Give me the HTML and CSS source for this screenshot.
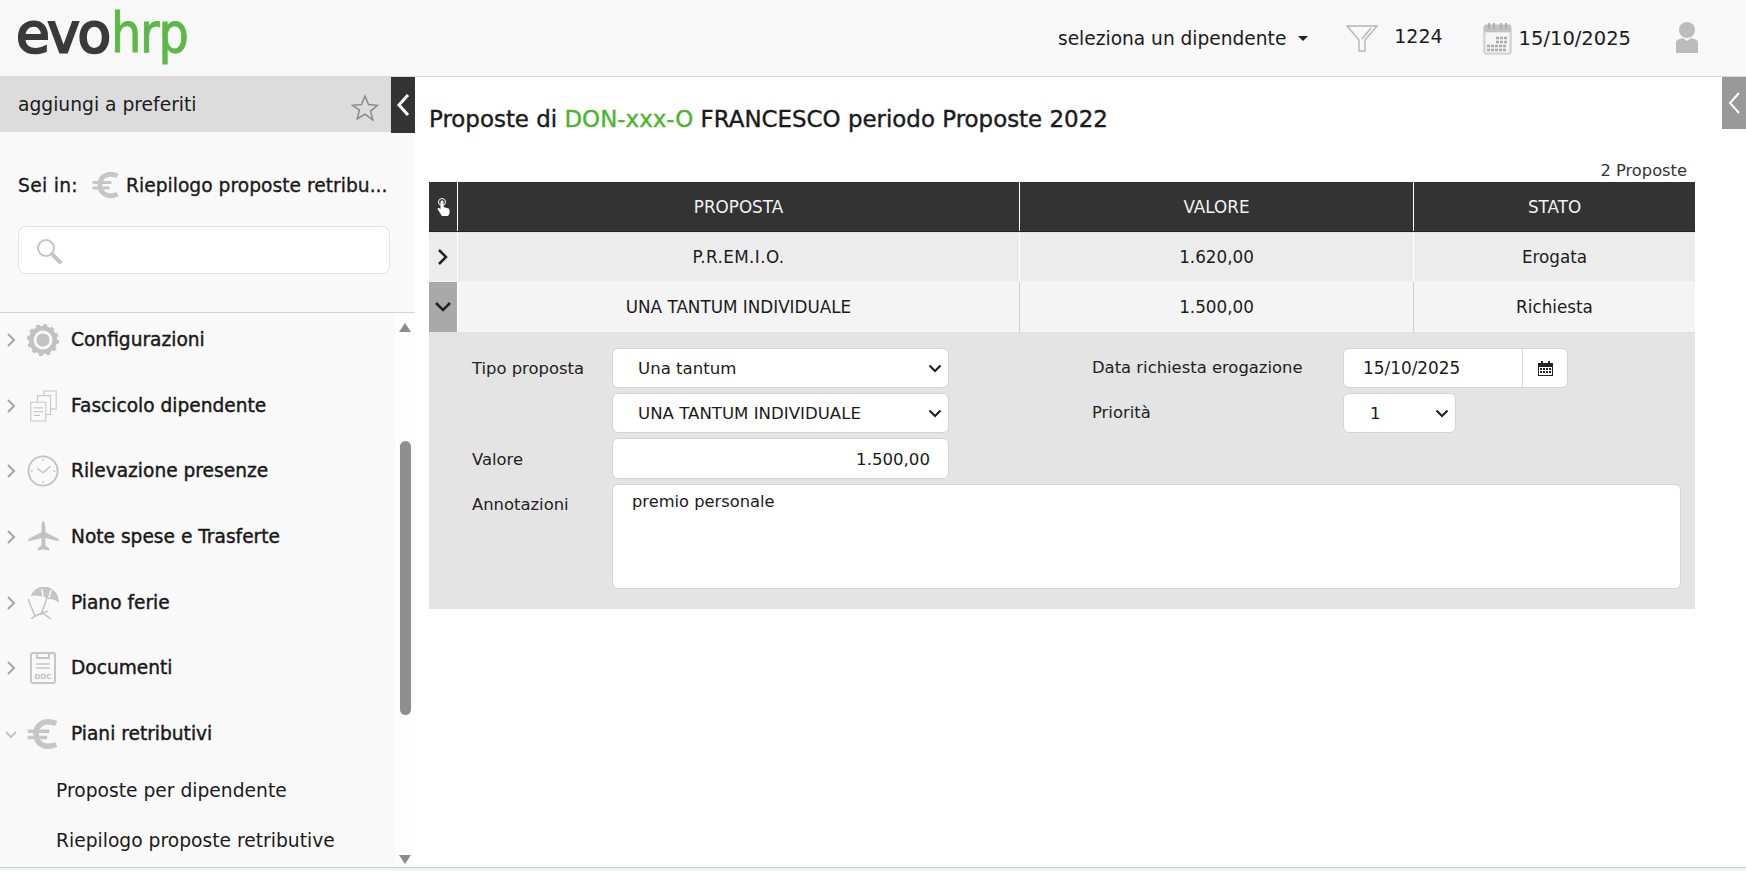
FILE: index.html
```html
<!DOCTYPE html>
<html lang="it">
<head>
<meta charset="utf-8">
<title>evohrp</title>
<link rel="stylesheet" href="styles.css">
</head>
<body>
<header class="topbar">
  <div class="logo"><span class="logo-evo">evo</span><span class="logo-hrp">hrp</span></div>
  <div class="top-actions">
    <div class="emp-select">seleziona un dipendente <span class="caret"></span></div>
    <div class="filter">
      <svg width="32" height="29" viewBox="0 0 32 29" fill="none" stroke="#b4b4b4" stroke-width="1.400"><path d="M1 2h30L19 16v11h-6V16z"/><path d="M25 4 16 15"/></svg>
      <span class="filter-n">1224</span>
    </div>
    <div class="date">
      <svg width="29" height="33" viewBox="0 0 29 33"><rect x="1" y="3" width="27" height="29" rx="2" fill="#e4e4e4" stroke="#bdbdbd"/><rect x="1" y="3" width="27" height="7" fill="#c2c2c2"/><path d="M6 1v6M11 1v6M18 1v6M23 1v6" stroke="#b0b0b0" stroke-width="2"/><rect x="3" y="11" width="23" height="19" fill="#f6f6f6"/><path d="M13 16h11M13 20h11M4 24h20M4 28h20" stroke="#aaa" stroke-width="2.600" stroke-dasharray="3 1"/></svg>
      <span>15/10/2025</span>
    </div>
    <svg class="user" width="24" height="32" viewBox="0 0 24 32" fill="#bcbcbc"><ellipse cx="12" cy="8" rx="8" ry="8"/><path d="M1 31V21c0-3 3-4 7-5l4 3 4-3c4 1 7 2 7 5v10z"/></svg>
  </div>
</header>
<div class="layout">
  <aside class="sidebar">
    <div class="fav">
      <span>aggiungi a preferiti</span>
      <svg width="28" height="27" viewBox="0 0 28 27" fill="none" stroke="#8a8a8a" stroke-width="1.500"><path d="M14 2l3.500 8.600 9 .7-6.900 5.800 2.200 8.900L14 20.200 6.200 25l2.200-8.900L1.500 11.300l9-.7z"/></svg>
    </div>
    <button class="toggle toggle-left" type="button"><svg width="14" height="24" viewBox="0 0 14 24" fill="none" stroke="#fff" stroke-width="3"><path d="M12 2 3 12l9 10"/></svg></button>
    <div class="crumb">
      <span class="crumb-label">Sei in:</span>
      <svg width="28" height="30" viewBox="0 0 46 46" fill="none" stroke="#c6c6c6"><path d="M42 8C26 1 13 9 13 23s13 22 29 15" stroke-width="8"/><path d="M1 19h31M1 28h28" stroke-width="5"/></svg>
      <span class="crumb-text">Riepilogo proposte retribu...</span>
    </div>
    <div class="search">
      <svg width="26" height="26" viewBox="0 0 26 26" fill="none" stroke="#c4c4c4"><circle cx="10" cy="10" r="8" stroke-width="2"/><path d="M16 16l8 8" stroke-width="4" stroke-linecap="round"/></svg>
    </div>
    <div class="menu-wrap">
      <nav class="menu">
        <div class="mi"><svg class="chev" width="10" height="14" viewBox="0 0 10 14" fill="none" stroke="#a5a5a5" stroke-width="2"><path d="M2 1l6 6-6 6"/></svg>
          <svg class="mi-ic" width="32" height="32" viewBox="0 0 34 34"><circle cx="17" cy="17" r="12.500" fill="none" stroke="#c2c2c2" stroke-width="5"/><circle cx="17" cy="17" r="15" fill="none" stroke="#c2c2c2" stroke-width="4" stroke-dasharray="4 3.850"/><circle cx="17" cy="17" r="7" fill="#c2c2c2"/></svg>
          <span>Configurazioni</span></div>
        <div class="mi"><svg class="chev" width="10" height="14" viewBox="0 0 10 14" fill="none" stroke="#a5a5a5" stroke-width="2"><path d="M2 1l6 6-6 6"/></svg>
          <svg class="mi-ic" width="32" height="32" viewBox="0 0 34 34" fill="#fafafa" stroke="#c8c8c8" stroke-width="1.200"><path d="M18 1h13v19H18z"/><path d="M11 6h14v20H11z"/><path d="M4 13h16v20H4z"/><path d="M7 19h10M7 23h10M7 27h7"/></svg>
          <span>Fascicolo dipendente</span></div>
        <div class="mi"><svg class="chev" width="10" height="14" viewBox="0 0 10 14" fill="none" stroke="#a5a5a5" stroke-width="2"><path d="M2 1l6 6-6 6"/></svg>
          <svg class="mi-ic" width="32" height="32" viewBox="0 0 34 34" fill="none" stroke="#c2c2c2"><circle cx="17" cy="17" r="15.500" stroke-width="2"/><path d="M11 14l6 5 8-7" stroke-width="1.500"/><path d="M17 4v2M17 28v2M4 17h2M28 17h2" stroke-width="1.500"/></svg>
          <span>Rilevazione presenze</span></div>
        <div class="mi"><svg class="chev" width="10" height="14" viewBox="0 0 10 14" fill="none" stroke="#a5a5a5" stroke-width="2"><path d="M2 1l6 6-6 6"/></svg>
          <svg class="mi-ic" width="32" height="32" viewBox="0 0 34 34" fill="#c2c2c2"><path d="M17 0c1.500 0 2.600 4 2.600 9v3l14 7v2.500l-14-3.500v8l4 3v2.500L17 30l-5.600 1.500V29l4-3v-8l-14 3.500V19l14-7V9c0-5 .600-9 1.600-9z"/></svg>
          <span>Note spese e Trasferte</span></div>
        <div class="mi"><svg class="chev" width="10" height="14" viewBox="0 0 10 14" fill="none" stroke="#a5a5a5" stroke-width="2"><path d="M2 1l6 6-6 6"/></svg>
          <svg class="mi-ic" width="32" height="32" viewBox="0 0 32 32" fill="none" stroke="#c2c2c2" stroke-width="1.500"><path d="M5 8C8 2 15-1 21 1c6 2 10 7 10 13-3-2-6-3-9-2.500-5-3-11-4-17-3.500z" fill="#c6c6c6"/><path d="M15 2l1 8M24 3l-2 8" stroke="#f9f9f9"/><path d="M20 11l-6 17M1 12l7 17 13-5M8 29l-4 3M14 25l10 7"/></svg>
          <span>Piano ferie</span></div>
        <div class="mi"><svg class="chev" width="10" height="14" viewBox="0 0 10 14" fill="none" stroke="#a5a5a5" stroke-width="2"><path d="M2 1l6 6-6 6"/></svg>
          <svg class="mi-ic" width="32" height="32" viewBox="0 0 32 32" fill="none" stroke="#c6c6c6"><rect x="4" y="1" width="24" height="30" rx="2" stroke-width="2"/><path d="M10 1v5h12V1" stroke-width="2"/><path d="M9 12h14M9 16h14" stroke-width="1.300"/><text class="doc-t" x="16" y="27" text-anchor="middle">DOC</text></svg>
          <span>Documenti</span></div>
        <div class="mi"><svg class="chev chev-open" width="14" height="10" viewBox="0 0 14 10" fill="none" stroke="#c4c4c4" stroke-width="2"><path d="M2 2l5 5 5-5"/></svg>
          <svg class="mi-ic" width="32" height="32" viewBox="0 0 46 46" fill="none" stroke="#c6c6c6"><path d="M42 8C26 1 13 9 13 23s13 22 29 15" stroke-width="8"/><path d="M1 19h31M1 28h28" stroke-width="5"/></svg>
          <span>Piani retributivi</span></div>
        <div class="sub">Proposte per dipendente</div>
        <div class="sub">Riepilogo proposte retributive</div>
      </nav>
      <div class="scroll">
        <span class="arrow-up"></span>
        <div class="scroll-track"><div class="scroll-thumb"></div></div>
        <span class="arrow-down"></span>
      </div>
    </div>
  </aside>
  <main class="content">
    <button class="toggle toggle-right" type="button"><svg width="14" height="24" viewBox="0 0 14 24" fill="none" stroke="#fff" stroke-width="2"><path d="M12 2 3 12l9 10"/></svg></button>
    <h1 class="title">Proposte di <span class="green">DON-xxx-O</span> FRANCESCO periodo Proposte 2022</h1>
    <div class="count">2 Proposte</div>
    <div class="grid">
      <div class="row head">
        <div class="c c0"><svg width="15" height="20" viewBox="0 0 15 20"><circle cx="6" cy="5" r="3.500" fill="none" stroke="#fff"/><path d="M4.500 5c0-2 3-2 3 0v5l5 1.500c1.500 1 1.500 4 .5 6-.5 1-1 1.500-2 1.500H7c-1 0-1.500-.5-2-1.500L1.500 12c0-1.500 1.500-1.500 3 0z" fill="#fff"/></svg></div>
        <div class="c c1">PROPOSTA</div><div class="c c2">VALORE</div><div class="c c3">STATO</div>
      </div>
      <div class="row r1">
        <div class="c c0"><svg width="12" height="18" viewBox="0 0 12 18" fill="none" stroke="#222" stroke-width="2.500"><path d="M2 2l7 7-7 7"/></svg></div>
        <div class="c c1 spaced">P.R.EM.I.O.</div><div class="c c2">1.620,00</div><div class="c c3">Erogata</div>
      </div>
      <div class="row r2">
        <div class="c c0"><svg width="18" height="12" viewBox="0 0 18 12" fill="none" stroke="#222" stroke-width="2.500"><path d="M2 2l7 7 7-7"/></svg></div>
        <div class="c c1">UNA TANTUM INDIVIDUALE</div><div class="c c2">1.500,00</div><div class="c c3">Richiesta</div>
      </div>
      <form class="detail">
        <div class="d-left">
          <div class="f-row"><label class="lab">Tipo proposta</label><div class="ctl sel"><span>Una tantum</span><svg width="14" height="9" viewBox="0 0 14 9" fill="none" stroke="#222" stroke-width="2.200"><path d="M1.500 1.500 7 7l5.500-5.500"/></svg></div></div>
          <div class="f-row"><label class="lab"></label><div class="ctl sel"><span>UNA TANTUM INDIVIDUALE</span><svg width="14" height="9" viewBox="0 0 14 9" fill="none" stroke="#222" stroke-width="2.200"><path d="M1.500 1.500 7 7l5.500-5.500"/></svg></div></div>
          <div class="f-row"><label class="lab">Valore</label><div class="ctl num">1.500,00</div></div>
        </div>
        <div class="d-right">
          <div class="f-row"><label class="lab lab-r">Data richiesta erogazione</label><div class="date-ctl"><div class="date-val">15/10/2025</div><div class="date-btn"><svg width="15" height="15" viewBox="0 0 15 15" fill="#222"><path d="M0 2h3V0h2v2h5V0h2v2h3v13H0zM1 6v8h13V6z"/><path d="M2 7h2v2H2zm3 0h2v2H5zm3 0h2v2H8zm3 0h2v2h-2zM2 10h2v2H2zm3 0h2v2H5zm3 0h2v2H8zm3 0h2v2h-2z"/></svg></div></div></div>
          <div class="f-row"><label class="lab lab-r">Priorità</label><div class="ctl sel sel-s"><span>1</span><svg width="14" height="9" viewBox="0 0 14 9" fill="none" stroke="#222" stroke-width="2.200"><path d="M1.500 1.500 7 7l5.500-5.500"/></svg></div></div>
        </div>
        <div class="d-notes"><label class="lab">Annotazioni</label><div class="notes">premio personale</div></div>
      </form>
    </div>
  </main>
</div>
<div class="statusline"></div>
</body>
</html>
```
FILE: styles.css
```css
* { box-sizing: border-box; }
html, body { margin: 0; height: 100%; overflow: hidden; }
body { font-family: "DejaVu Sans", Verdana, sans-serif; font-size: 16px; color: #1b1b1b; background: #fff; }
button { border: 0; padding: 0; }

.topbar { height: 77px; background: #f8f8f8; border-bottom: 1px solid #d8d8d8; display: flex; align-items: center; justify-content: space-between; padding: 0 47px 0 16px; }
.logo { font-size: 55px; line-height: 64px; height: 64px; margin-top: -10px; white-space: nowrap; }
.logo-evo { color: #3a3a3a; letter-spacing: -2.500px; -webkit-text-stroke: 2.200px #3a3a3a; }
.logo-hrp { display: inline-block; margin-left: 2px; color: #5cb947; letter-spacing: -1.500px; -webkit-text-stroke: 1px #5cb947; transform: scaleX(.87); transform-origin: left center; }
.top-actions { display: flex; align-items: center; }
.emp-select { font-size: 18.600px; margin-right: 38px; display: flex; align-items: center; gap: 5px; white-space: pre; }
.caret { display: inline-block; border-left: 5px solid transparent; border-right: 5px solid transparent; border-top: 5px solid #222; margin-left: 1px; }
.filter { display: flex; align-items: center; margin-right: 40px; font-size: 19px; }
.filter-n { margin-top: -4px; margin-left: 16px; }
.date { display: flex; align-items: center; gap: 7px; font-size: 19.500px; margin-right: 44px; }

.layout { display: flex; height: 791px; border-bottom: 1px solid #bcd5c9; }
.statusline { height: 3px; background: #eef5f2; }
.sidebar { width: 415px; flex: none; background: #f9f9f9; position: relative; display: flex; flex-direction: column; }
.fav { width: 391px; height: 55px; background: #dcdcdc; display: flex; align-items: center; justify-content: space-between; padding: 0 12px 0 18px; font-size: 18.700px; }
.fav svg { margin-top: 5px; }
.toggle { position: absolute; display: flex; align-items: center; justify-content: center; }
.toggle-left { left: 391px; top: 0; width: 24px; height: 56px; background: #333; }
.toggle-right { right: 0; top: 0; width: 24px; height: 52px; background: #999; }
.crumb { display: flex; align-items: center; padding-left: 18px; margin-top: 38px; height: 30px; font-size: 18.700px; -webkit-text-stroke: .3px #111; }
.crumb-label { width: 74px; letter-spacing: .3px; }
.crumb-text { margin-left: 6px; }
.search { margin: 26px 0 0 18px; width: 372px; height: 48px; background: #fff; border: 1px solid #e2e2e2; border-radius: 8px; padding: 11px 0 0 17px; }
.menu-wrap { margin-top: 38px; border-top: 1px solid #d4d4d4; flex: 1; display: flex; min-height: 0; }
.menu { flex: 1; padding-top: 7px; }
.mi { height: 65.700px; display: flex; align-items: flex-start; font-size: 18.600px; -webkit-text-stroke: .4px #111; padding: 4px 0 0 6px; }
.chev { flex: none; margin-top: 9px; }
.chev-open { margin: 12px -2px 0 -2px; }
.mi-ic { margin: 0 0 0 11px; flex: none; }
.mi span { margin-left: 12px; margin-top: 5px; }
.doc-t { font-family: "DejaVu Sans", sans-serif; font-size: 7px; font-weight: 700; fill: #c2c2c2; stroke: none; -webkit-text-stroke: 0; }
.sub { font-size: 18.700px; height: 50px; padding-left: 56px; }
.scroll { width: 20px; flex: none; display: flex; flex-direction: column; align-items: center; padding: 10px 0 3px; background: #fdfdfd; }
.arrow-up { width: 0; height: 0; border: 6px solid transparent; border-top: 0; border-bottom: 9px solid #8c8c8c; }
.arrow-down { width: 0; height: 0; border: 6px solid transparent; border-bottom: 0; border-top: 9px solid #8c8c8c; }
.scroll-track { flex: 1; width: 100%; padding-top: 109px; display: flex; justify-content: center; }
.scroll-thumb { width: 11px; height: 274px; background: #8e8e8e; border-radius: 6px; }

.content { flex: 1; position: relative; padding: 27px 0 0 14px; min-width: 0; }
.title { margin: 0; font-size: 22.930px; font-weight: 400; -webkit-text-stroke: .4px #1b1b1b; line-height: 30px; }
.green { color: #4cb52e; -webkit-text-stroke-color: #4cb52e; }
.count { text-align: right; width: 1258px; font-size: 16.300px; margin-top: 27px; line-height: 20px; color: #333; }
.grid { width: 1266px; margin-top: 1px; font-size: 16.800px; }
.row { display: flex; }
.c { display: flex; align-items: center; justify-content: center; border-right: 1px solid #fff; }
.c0 { width: 29px; flex: none; }
.c1 { width: 562px; flex: none; }
.c2 { width: 394px; flex: none; }
.c3 { flex: 1; border-right: 0; }
.spaced { letter-spacing: .4px; }
.head { height: 50px; background: #333; color: #f2f2f2; border-bottom: 1px solid #222; }
.head .c { height: 49px; }
.r1 { height: 50px; background: #ececec; border-bottom: 1px solid #f4f4f4; border-top: 1px solid #e4e4e4; }
.r2 { height: 51px; background: #f4f4f4; border-bottom: 1px solid #e0e0e0; }
.r2 .c { border-right-color: #cfcfcf; }
.r2 .c0 { background: #a9a9a9; border-right-color: #fff; }
.detail { background: #e4e4e4; height: 276px; padding: 15px 14px 20px 43px; display: grid; grid-template-columns: 620px 1fr; align-content: start; font-size: 16.400px; }
.f-row { display: flex; margin-bottom: 5px; }
.lab { width: 140px; flex: none; padding-top: 11px; color: #222; }
.f-row:nth-child(3) .lab { padding-top: 12px; }
.lab-r { width: 251px; padding-top: 10px; }
.ctl { width: 337px; height: 40px; background: #fff; border: 1px solid #d4d4d4; border-radius: 6px; display: flex; align-items: center; padding: 1px 6px 0 25px; justify-content: space-between; font-size: 16.600px; }
.f-row:nth-child(3) .ctl { height: 41px; }
.num { justify-content: flex-end; padding-right: 18px; }
.sel-s { width: 113px; padding-left: 26px; }
.date-ctl { display: flex; width: 225px; height: 40px; background: #fff; border: 1px solid #d4d4d4; border-radius: 6px; font-size: 16.900px; }
.date-val { flex: 1; padding: 9px 0 0 19px; border-right: 1px solid #d4d4d4; }
.date-btn { width: 44px; display: flex; align-items: center; justify-content: center; }
.d-notes { grid-column: 1 / 3; display: flex; }
.d-notes .lab { padding-top: 11px; }
.notes { flex: 1; height: 105px; background: #fff; border: 1px solid #d4d4d4; border-radius: 6px; padding: 7px 19px; font-size: 16.300px; }
```
